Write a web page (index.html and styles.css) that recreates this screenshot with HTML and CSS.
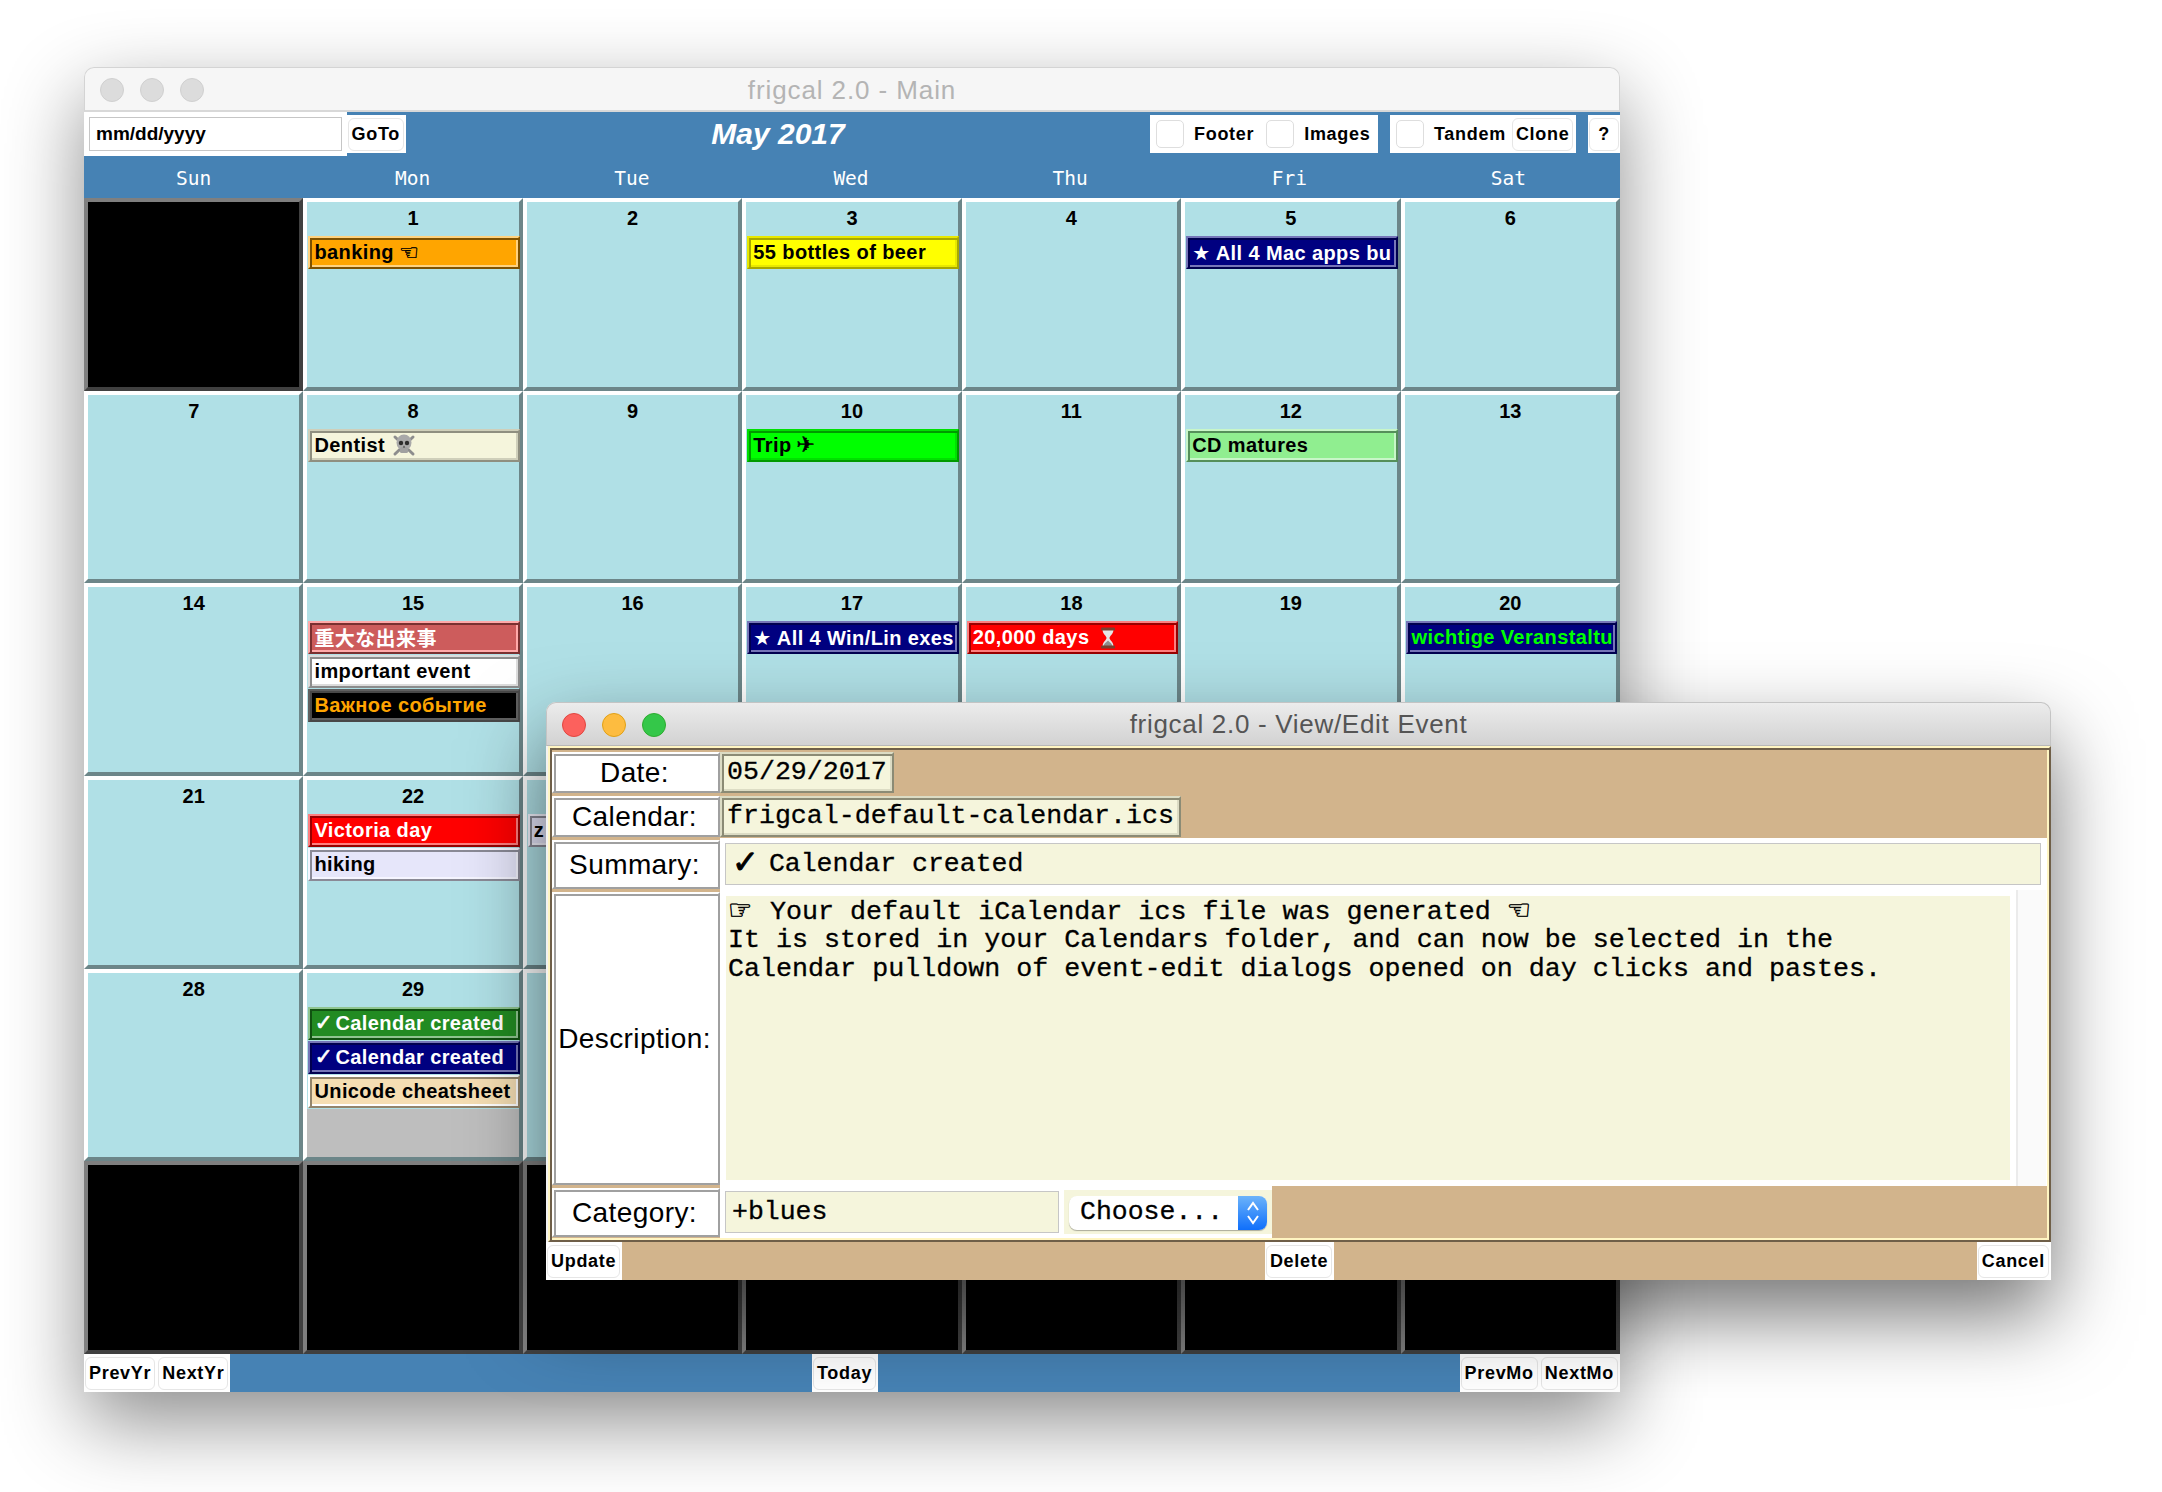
FILE: index.html
```html
<!DOCTYPE html>
<html lang="en">
<head>
    <meta charset="UTF-8">
    <meta name="viewport" content="width=device-width, initial-scale=1.0">
    <title>frigcal 2.0</title>
    <link rel="stylesheet" href="styles.css">
</head>
<body>
    <!-- main calendar window -->
    <div class="window main-window">
        <div class="titlebar titlebar-off">
            <div class="lights"><span class="light"></span><span class="light"></span><span class="light"></span></div>
            <div class="window-title">frigcal 2.0 - Main</div>
        </div>

        <div class="toolbar">
            <div class="goto-group">
                <div class="date-box"><div class="date-entry">mm/dd/yyyy</div></div>
                <div class="btn-box"><span class="btn">GoTo</span></div>
            </div>
            <div class="month-title">May 2017</div>
            <div class="tool-group">
                <div class="toggles toggles-a">
                    <span class="check"></span><span class="toggle-text">Footer</span>
                    <span class="check"></span><span class="toggle-text">Images</span>
                </div>
                <div class="toggles toggles-b">
                    <span class="check"></span><span class="toggle-text">Tandem</span>
                    <span class="btn">Clone</span>
                </div>
                <div class="btn-box help-box"><span class="btn">?</span></div>
            </div>
        </div>

        <div class="weekdays">
            <div>Sun</div><div>Mon</div><div>Tue</div><div>Wed</div><div>Thu</div><div>Fri</div><div>Sat</div>
        </div>

        <div class="month-grid">
            <div class="day blank"></div>
            <div class="day"><div class="num">1</div>
                <div class="ev ev-orange"><span>banking</span><span class="sym">☜</span></div></div>
            <div class="day"><div class="num">2</div></div>
            <div class="day"><div class="num">3</div>
                <div class="ev ev-yellow">55 bottles of beer</div></div>
            <div class="day"><div class="num">4</div></div>
            <div class="day"><div class="num">5</div>
                <div class="ev ev-navy">★ All 4 Mac apps bu</div></div>
            <div class="day"><div class="num">6</div></div>

            <div class="day"><div class="num">7</div></div>
            <div class="day"><div class="num">8</div>
                <div class="ev ev-beige"><span>Dentist</span>
                    <svg class="pic pic-skull" width="24" height="24" viewBox="0 0 24 24">
                        <g stroke="#8d8d8d" stroke-width="3" stroke-linecap="round">
                            <path d="M3 4 21 21"/><path d="M21 4 3 21"/>
                        </g>
                        <ellipse cx="12" cy="9.5" rx="7.5" ry="8" fill="#a9a9a9"/>
                        <rect x="8" y="14" width="8" height="6" rx="1.5" fill="#a0a0a0"/>
                        <circle cx="9" cy="10" r="2.2" fill="#2c2c2c"/>
                        <circle cx="15" cy="10" r="2.2" fill="#2c2c2c"/>
                        <path d="M12 12.5 13 14.5H11Z" fill="#333"/>
                    </svg></div></div>
            <div class="day"><div class="num">9</div></div>
            <div class="day"><div class="num">10</div>
                <div class="ev ev-lime"><span>Trip</span><span class="sym">✈</span></div></div>
            <div class="day"><div class="num">11</div></div>
            <div class="day"><div class="num">12</div>
                <div class="ev ev-lightgreen">CD matures</div></div>
            <div class="day"><div class="num">13</div></div>

            <div class="day"><div class="num">14</div></div>
            <div class="day"><div class="num">15</div>
                <div class="ev ev-indianred">重大な出来事</div>
                <div class="ev ev-white">important event</div>
                <div class="ev ev-black">Важное событие</div></div>
            <div class="day"><div class="num">16</div></div>
            <div class="day"><div class="num">17</div>
                <div class="ev ev-navy">★ All 4 Win/Lin exes</div></div>
            <div class="day"><div class="num">18</div>
                <div class="ev ev-red"><span>20,000 days</span>
                    <svg class="pic pic-glass" width="16" height="22" viewBox="0 0 16 22">
                        <path d="M2.5 2.5H13.5C13.5 7 9.5 9 9.5 11S13.5 15 13.5 19.5H2.5C2.5 15 6.5 13 6.5 11S2.5 7 2.5 2.5Z" fill="#e6e6e6"/>
                        <path d="M3.5 19.5C4 16 7 15 8 13.5 9 15 12 16 12.5 19.5Z" fill="#8f8f8f"/>
                        <rect x="1" y="0.5" width="14" height="3" rx="1" fill="#7a4030"/>
                        <rect x="1" y="18.5" width="14" height="3" rx="1" fill="#7a4030"/>
                    </svg></div></div>
            <div class="day"><div class="num">19</div></div>
            <div class="day"><div class="num">20</div>
                <div class="ev ev-navy ev-green-text">wichtige Veranstaltu</div></div>

            <div class="day"><div class="num">21</div></div>
            <div class="day"><div class="num">22</div>
                <div class="ev ev-red">Victoria day</div>
                <div class="ev ev-lavender">hiking</div></div>
            <!-- this week is behind the dialog -->
            <div class="day"><div class="num"></div>
                <div class="ev ev-lavender">z</div></div>
            <div class="day"></div>
            <div class="day"></div>
            <div class="day"></div>
            <div class="day"></div>

            <div class="day"><div class="num">28</div></div>
            <div class="day"><div class="num">29</div>
                <div class="ev ev-forest"><span class="tick">✓</span><span>Calendar created</span></div>
                <div class="ev ev-navy"><span class="tick">✓</span><span>Calendar created</span></div>
                <div class="ev ev-wheat">Unicode cheatsheet</div>
                <div class="day-fill"></div></div>
            <div class="day"></div>
            <div class="day"></div>
            <div class="day blank"></div>
            <div class="day blank"></div>
            <div class="day blank"></div>

            <div class="day blank"></div>
            <div class="day blank"></div>
            <div class="day blank"></div>
            <div class="day blank"></div>
            <div class="day blank"></div>
            <div class="day blank"></div>
            <div class="day blank"></div>
        </div>

        <div class="footer-bar">
            <div class="btn-box"><span class="btn">PrevYr</span><span class="btn">NextYr</span></div>
            <div class="btn-box"><span class="btn">Today</span></div>
            <div class="btn-box"><span class="btn">PrevMo</span><span class="btn">NextMo</span></div>
        </div>
    </div>

    <!-- view/edit dialog, on top of the main window -->
    <div class="window edit-window">
        <div class="titlebar titlebar-on">
            <div class="lights">
                <span class="light light-red"></span><span class="light light-yellow"></span><span class="light light-green"></span>
            </div>
            <div class="window-title">frigcal 2.0 - View/Edit Event</div>
        </div>

        <div class="frame">
            <div class="row row-short">
                <div class="label ridge">Date:</div>
                <div class="value"><div class="tall-entry ridge entry-date">05/29/2017</div></div>
            </div>
            <div class="row row-short">
                <div class="label ridge">Calendar:</div>
                <div class="value"><div class="tall-entry ridge entry-cal">frigcal-default-calendar.ics</div></div>
            </div>
            <div class="row row-tall">
                <div class="label ridge">Summary:</div>
                <div class="value value-white"><div class="flat-entry"><span class="mono-tick">✓</span> Calendar created</div></div>
            </div>
            <div class="row row-desc">
                <div class="label ridge">Description:</div>
                <div class="value value-white value-desc">
                    <div class="desc-text"><span class="mono-hand">☞</span> Your default iCalendar ics file was generated <span class="mono-hand">☜</span><br>It is stored in your Calendars folder, and can now be selected in the<br>Calendar pulldown of event-edit dialogs opened on day clicks and pastes.</div>
                    <div class="scroll-track"></div>
                </div>
            </div>
            <div class="row row-tall">
                <div class="label ridge">Category:</div>
                <div class="value value-cat">
                    <div class="cat-left"><div class="flat-entry">+blues</div></div>
                    <div class="cat-choose">
                        <div class="choose-wrap">
                            <div class="choose">
                                <span class="choose-text">Choose...</span>
                                <span class="stepper">
                                    <svg width="14" height="26" viewBox="0 0 14 26" fill="none" stroke="#fff" stroke-width="2">
                                        <path d="M2 10 7 3 12 10"/><path d="M2 16 7 23 12 16"/>
                                    </svg>
                                </span>
                            </div>
                        </div>
                    </div>
                </div>
            </div>
        </div>

        <div class="actions">
            <div class="btn-box"><span class="btn">Update</span></div>
            <div class="btn-box"><span class="btn">Delete</span></div>
            <div class="btn-box"><span class="btn">Cancel</span></div>
        </div>
    </div>
</body>
</html>
```

FILE: styles.css
```css
* {
    box-sizing: border-box;
}
body {
    margin: 0;
    width: 2162px;
    height: 1492px;
    position: relative;
    overflow: hidden;
    background: white;
    font-family: "Liberation Sans", "DejaVu Sans", "Noto Sans CJK JP", sans-serif;
}

/* windows */
.window {
    position: absolute;
    display: flex;
    flex-direction: column;
    border-radius: 10px 10px 0 0;
}
.main-window {
    left: 84px;
    top: 67px;
    width: 1536px;
    height: 1325px;
    background: white;
    box-shadow: 0 30px 80px rgba(0, 0, 0, 0.45);
}
.edit-window {
    left: 546px;
    top: 702px;
    width: 1505px;
    height: 578px;
    background: #f2f2f2;
    box-shadow: 0 35px 80px rgba(0, 0, 0, 0.55);
}
.titlebar {
    position: relative;
    display: flex;
    align-items: center;
    justify-content: center;
    flex: none;
    border-radius: 10px 10px 0 0;
}
.titlebar-off {
    height: 45px;
    padding-top: 3px;
    background: #f6f6f6;
    border: 1px solid #d4d4d4;
    border-bottom: 2px solid #d8d8d8;
}
.titlebar-on {
    height: 44px;
    background: linear-gradient(#ececec, #d2d2d2);
    border: 1px solid #c4c4c4;
    border-bottom: 1px solid #b8b8b8;
}
.lights {
    position: absolute;
    left: 15px;
    top: 10px;
    display: flex;
    gap: 16px;
}
.light {
    width: 24px;
    height: 24px;
    border-radius: 50%;
    background: #dcdcdc;
    border: 1px solid #d0d0d0;
}
.light-red {
    background: #fc615d;
    border-color: #e14640;
}
.light-yellow {
    background: #fdbc40;
    border-color: #e1a116;
}
.light-green {
    background: #34c749;
    border-color: #2dac2f;
}
.window-title {
    font-size: 26px;
}
.titlebar-off .window-title {
    color: #b4b4b4;
    letter-spacing: 0.9px;
}
.titlebar-on .window-title {
    color: #555;
    letter-spacing: 0.7px;
}

/* buttons */
.btn-box {
    display: flex;
    gap: 3px;
    background: white;
    padding: 3px 2px 2px 1px;
}
.btn {
    display: flex;
    align-items: center;
    padding: 0 3px;
    height: 33px;
    background: white;
    border: 1px solid #e6e6e6;
    border-radius: 6px;
    font-size: 18px;
    font-weight: bold;
    letter-spacing: 0.7px;
    color: black;
}

/* top bar */
.toolbar {
    display: flex;
    align-items: center;
    flex: none;
    height: 44px;
    background: #4682b4;
}
.goto-group {
    display: flex;
    align-items: center;
    flex: none;
    width: 322px;
}
.date-box {
    width: 264px;
    height: 44px;
    padding: 5px;
    background: white;
}
.date-entry {
    height: 34px;
    padding: 0 6px;
    line-height: 32px;
    border: 1px solid #c6c6c6;
    font-size: 19px;
    font-weight: bold;
}
.month-title {
    flex: 1;
    text-align: center;
    color: white;
    font-size: 30px;
    font-weight: bold;
    font-style: italic;
}
.tool-group {
    display: flex;
    gap: 12px;
    flex: none;
    width: 470px;
    height: 38px;
}
.toggles {
    display: flex;
    align-items: center;
    background: white;
    padding: 0 6px;
}
.toggles-a {
    width: 228px;
}
.toggles-b {
    width: 186px;
}
.check {
    flex: none;
    width: 28px;
    height: 28px;
    background: white;
    border: 1px solid #dedede;
    border-radius: 5px;
}
.toggle-text {
    margin: 0 12px 0 10px;
    font-size: 18px;
    font-weight: bold;
    letter-spacing: 0.7px;
}
.toggles-b .toggle-text {
    margin-right: 6px;
}
.toggles-b .btn {
    padding: 0 3px;
}
.help-box {
    width: 32px;
    padding-right: 1px;
}
.help-box .btn {
    flex: 1;
    justify-content: center;
}

/* weekday names */
.weekdays {
    display: grid;
    grid-template-columns: repeat(7, minmax(0, 1fr));
    flex: none;
    height: 42px;
    padding-right: 2px;
    background: #4682b4;
    color: white;
    font-family: "DejaVu Sans Mono", monospace;
    font-size: 19.5px;
    line-height: 45px;
    text-align: center;
}

/* month */
.month-grid {
    display: grid;
    grid-template-columns: repeat(7, minmax(0, 1fr));
    grid-template-rows: repeat(6, minmax(0, 1fr));
    flex: none;
    height: 1156px;
}
.day {
    display: flex;
    flex-direction: column;
    min-width: 0;
    background: #b0e0e6;
    border: 4px solid;
    border-color: white #6c8689 #6c8689 white;
}
.day.blank {
    background: black;
    border-color: #7f7f7f #404040 #404040 #7f7f7f;
}
.num {
    flex: none;
    height: 34px;
    line-height: 32px;
    text-align: center;
    font-size: 20px;
    font-weight: bold;
}
.day-fill {
    flex: 1;
    background: #bebebe;
}

/* event bars, a tk ridge relief */
.ev,
.ridge {
    border: 2px solid;
    border-color: var(--lt) var(--dk) var(--dk) var(--lt);
    box-shadow: inset 2px 2px 0 var(--dk), inset -2px -2px 0 var(--lt);
}
.ev {
    display: flex;
    align-items: center;
    flex: none;
    height: 33px;
    margin: 0 -1px 1px 1px;
    padding: 0 2px 0 4px;
    white-space: nowrap;
    font-size: 20px;
    font-weight: bold;
    letter-spacing: 0.4px;
    color: black;
    background: var(--bg);
}
.ev .sym {
    margin-left: 5px;
    font-family: "DejaVu Sans", sans-serif;
    font-size: 22px;
    line-height: 20px;
    -webkit-text-stroke: 0.4px currentColor;
}
.ev .tick {
    width: 21px;
    font-family: "DejaVu Sans", sans-serif;
    font-size: 22px;
    line-height: 20px;
    -webkit-text-stroke: 0.6px currentColor;
}
.ev .pic {
    flex: none;
}
.ev .pic-skull {
    margin-left: 7px;
}
.ev .pic-glass {
    margin-left: 11px;
}
.ev-orange { --bg: #ffa500; --lt: #ffd27f; --dk: #7f5200; }
.ev-yellow { --bg: #ffff00; --lt: #e8e800; --dk: #a8a800; }
.ev-navy { --bg: #000080; --lt: #7676b8; --dk: #000050; color: white; }
.ev-beige { --bg: #f5f5dc; --lt: #cfcfba; --dk: #8f8f80; }
.ev-lime { --bg: #00ff00; --lt: #00e000; --dk: #009a00; }
.ev-lightgreen { --bg: #90ee90; --lt: #c8f6c8; --dk: #558f5a; }
.ev-indianred { --bg: #cd5c5c; --lt: #ffa9a9; --dk: #7a3030; color: white; }
.ev-white { --bg: white; --lt: #dcdcdc; --dk: #8c8c8c; }
.ev-black { --bg: black; --lt: #606060; --dk: #484848; color: #ffa500; }
.ev-red { --bg: #ff0000; --lt: #ff7f7f; --dk: #990000; color: white; }
.ev-lavender { --bg: #e6e6fa; --lt: #f5f5ff; --dk: #8a8a96; }
.ev-forest { --bg: #228b22; --lt: #90c590; --dk: #115211; color: white; }
.ev-wheat { --bg: #f5deb3; --lt: #ffffff; --dk: #93856b; }
.ev-green-text { color: #00ff00; }

/* bottom bar */
.footer-bar {
    display: flex;
    justify-content: space-between;
    flex: none;
    height: 38px;
    background: #4682b4;
}

/* dialog */
.frame {
    --lt: #fff5c2;
    --dk: #6f5f48;
    flex: none;
    height: 496px;
    margin-left: 2px;
    padding: 2px;
    background: #d2b48c;
    border: 2px solid;
    border-color: var(--lt) var(--dk) var(--dk) var(--lt);
    box-shadow: inset 2px 2px 0 var(--dk), inset -2px -2px 0 var(--lt);
}
.row {
    display: grid;
    grid-template-columns: 168px minmax(0, 1fr);
}
.row-short {
    height: 44px;
}
.row-tall {
    height: 52px;
}
.row-desc {
    height: 296px;
}
.label {
    --lt: white;
    --dk: #a0a0a0;
    display: flex;
    align-items: center;
    justify-content: center;
    margin: 2px 0 1px;
    padding: 1px 3px 0 0;
    background: white;
    font-size: 28px;
    letter-spacing: 0.4px;
    color: black;
}
.value {
    min-width: 0;
}
.value-white {
    padding: 5px 6px 5px 5px;
    background: white;
}
.tall-entry,
.flat-entry,
.desc-text,
.choose-text {
    font-family: "Liberation Mono", "DejaVu Sans Mono", monospace;
    -webkit-text-stroke: 0.3px currentColor;
    color: black;
}
.tall-entry {
    --lt: #dcdcc4;
    --dk: #8b8b75;
    display: inline-block;
    height: 41px;
    margin-top: 2px;
    padding: 0 5px;
    background: #f5f5dc;
    font-size: 26.6px;
    line-height: 37px;
}
.flat-entry {
    height: 42px;
    padding: 0 6px;
    background: #f5f5dc;
    border: 1px solid #c6c6c6;
    font-size: 26.5px;
    line-height: 41px;
}
.mono-tick {
    display: inline-block;
    width: 21px;
    font-family: "DejaVu Sans", sans-serif;
    font-size: 32px;
    line-height: 30px;
    vertical-align: -2px;
    -webkit-text-stroke: 1px currentColor;
}
.mono-hand {
    display: inline-block;
    width: 26px;
    font-family: "DejaVu Sans", sans-serif;
    font-size: 27px;
    line-height: 24px;
    -webkit-text-stroke: 0.5px currentColor;
}
.value-desc {
    display: flex;
    padding: 0 1px 0 6px;
    gap: 6px;
}
.desc-text {
    flex: 1;
    height: 284px;
    margin-top: 6px;
    padding: 2px 2px;
    background: #f5f5dc;
    font-size: 26.7px;
    line-height: 28.4px;
    white-space: nowrap;
}
.scroll-track {
    flex: none;
    width: 30px;
    background: #fafafa;
    border-left: 2px solid #ebebeb;
}
.value-cat {
    display: flex;
}
.cat-left {
    width: 344px;
    padding: 5px;
    background: white;
}
.cat-choose {
    width: 208px;
    padding: 4px 0;
    background: white;
}
.choose-wrap {
    height: 44px;
    padding: 6px 5px 4px;
    background: #f5f5dc;
}
.choose {
    display: flex;
    align-items: stretch;
    height: 34px;
    background: white;
    border-radius: 8px;
    box-shadow: 0 1px 1px rgba(0, 0, 0, 0.3);
    overflow: hidden;
}
.choose-text {
    flex: 1;
    padding-left: 11px;
    font-size: 26.5px;
    line-height: 33px;
}
.stepper {
    display: flex;
    align-items: center;
    justify-content: center;
    flex: none;
    width: 29px;
    background: linear-gradient(#6cb3fa, #0f6ffb);
}
.actions {
    display: flex;
    justify-content: space-between;
    flex: none;
    height: 38px;
    background: #d2b48c;
}
```
